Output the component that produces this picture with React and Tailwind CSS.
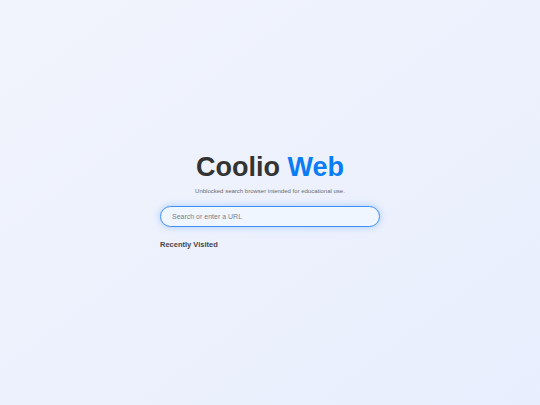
import React, { useState } from 'react';

const App = () => {
  const [query, setQuery] = useState('');

  return (
    <div className="min-h-screen w-full bg-gradient-to-br from-[#f1f4fc] to-[#e8eefd] font-['Liberation_Sans',Arial,sans-serif]">
      <div className="mx-auto flex w-[220px] flex-col items-center pt-[154px]">
        <h1 className="text-[27px] font-bold leading-none text-[#333333]">
          Coolio <span className="text-[#0a7cf4]">Web</span>
        </h1>
        <p className="mt-[7px] text-[6px] leading-none text-[#6b6b70]">
          Unblocked search browser intended for educational use.
        </p>
        <form
          onSubmit={(e) => e.preventDefault()}
          className="mt-[12px] w-full"
        >
          <input
            type="text"
            value={query}
            onChange={(e) => setQuery(e.target.value)}
            placeholder="Search or enter a URL"
            className="block h-[21px] w-full rounded-full border-[1.5px] border-[#3f8ff0] bg-[#eff6ff] px-[11px] text-[7px] text-[#333] outline-none shadow-[0_0_7px_rgba(40,130,245,0.35)] placeholder:text-[#7a7f88]"
          />
        </form>
        <div className="mt-[14px] w-full">
          <h2 className="text-[7.5px] font-bold leading-none text-[#444448]">Recently Visited</h2>
        </div>
      </div>
    </div>
  );
};

export default App;
